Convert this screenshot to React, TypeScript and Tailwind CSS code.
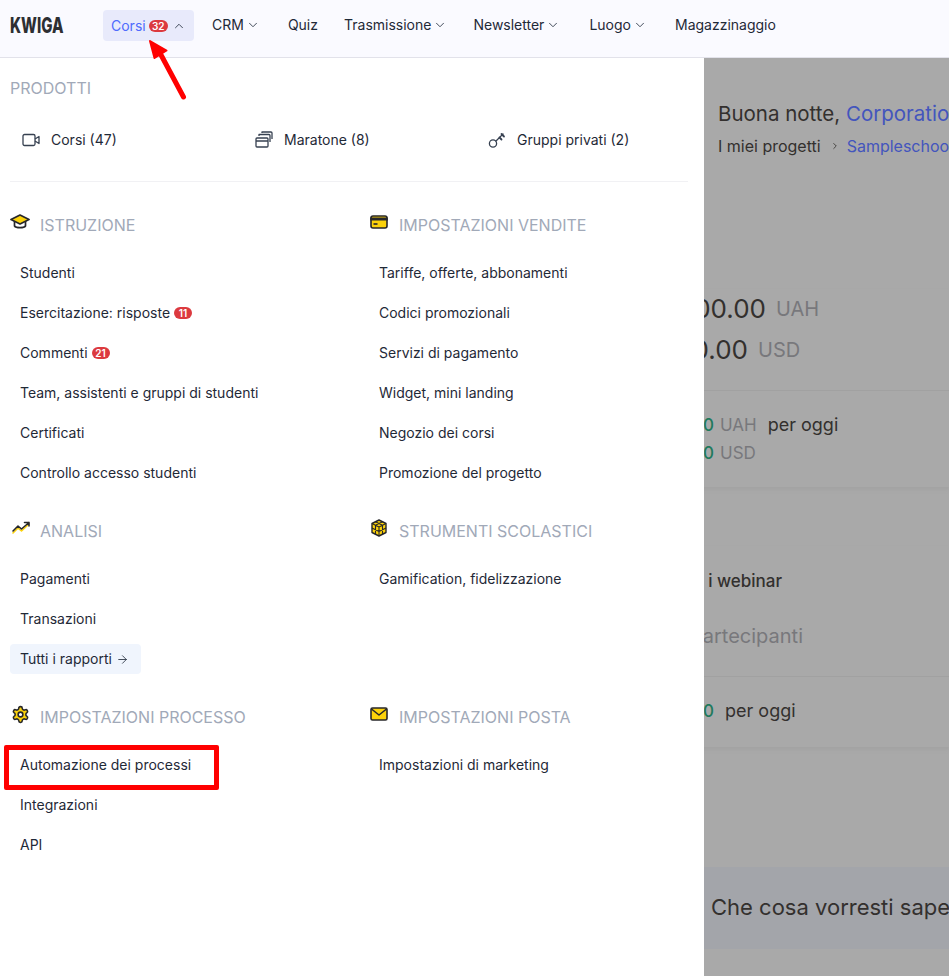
import React from 'react';
import { ChevronDown, ChevronUp, ChevronRight, ArrowRight } from 'lucide-react';

const Badge = ({ n, wide = false }: { n: number; wide?: boolean }) => (
  <span className={`inline-flex h-[12px] items-center justify-center rounded-full bg-[#dc3a3f] text-[10px] leading-none font-semibold text-white ${wide ? 'w-[19px]' : 'w-[18px]'}`}>
    {n}
  </span>
);

const NavItem = ({ label, menu = false, className = '' }: { label: string; menu?: boolean; className?: string }) => (
  <div className={`flex items-center gap-[2px] pb-[2px] ${className}`}>
    <span>{label}</span>
    {menu && <ChevronDown size={14} strokeWidth={1.6} className="text-[#374151]" />}
  </div>
);

// section icons, yellow with dark outline
const CapIcon = () => (
  <svg width="20" height="18" viewBox="0 0 20 18" fill="none" stroke="#27272a" strokeWidth="1.7" strokeLinejoin="round">
    <path d="M4.5 8v5c1.5 2.2 9.5 2.2 11 0V8" fill="#fff" />
    <path d="M10 2L1 6.5l9 4.5 9-4.5L10 2z" fill="#fcd20a" />
  </svg>
);

const CardIcon = () => (
  <svg width="18" height="14" viewBox="0 0 18 14" fill="none" stroke="#27272a" strokeWidth="1.6" className="ml-[1px]">
    <rect x="1" y="1" width="16" height="12" rx="2" fill="#fcd20a" />
    <path d="M1 3.2h16v1.6H1z" fill="#27272a" />
    <path d="M3.5 9h4" />
  </svg>
);

const TrendIcon = () => (
  <svg width="20" height="14" viewBox="0 0 20 14" fill="none" strokeWidth="1.6" strokeLinecap="round" strokeLinejoin="round" className="ml-[1px]">
    <path d="M2 12l5-5 3.5 3L18 3" stroke="#fcd20a" />
    <path d="M2 10l5-5 3.5 3L18 1.5M13.5 1.5H18V5" stroke="#27272a" />
  </svg>
);

const CubeIcon = () => (
  <svg width="18" height="18" viewBox="0 0 18 18" fill="#fcd20a" stroke="#27272a" strokeWidth="1.4" strokeLinejoin="round" className="ml-[1px]">
    <path d="M9 1l7 3.5v9L9 17l-7-3.5v-9L9 1z" />
    <path d="M2 4.5L9 8l7-3.5M9 8v9M5.5 2.8l7 3.5M12.5 2.8l-7 3.5M2 9l7 3.5L16 9M5.5 6.3v9M12.5 6.3v9" fill="none" strokeWidth="1.1" />
  </svg>
);

const GearIcon = () => (
  <svg width="19" height="19" viewBox="0 0 24 24" fill="#fcd20a" stroke="#27272a" strokeWidth="2" strokeLinejoin="round" className="ml-[1px]">
    <path d="M12.2 2h-.4a2 2 0 0 0-2 2v.2a2 2 0 0 1-1 1.7l-.4.3a2 2 0 0 1-2 0l-.2-.1a2 2 0 0 0-2.7.7l-.2.4a2 2 0 0 0 .7 2.7l.2.1a2 2 0 0 1 1 1.7v.5a2 2 0 0 1-1 1.8l-.2.1a2 2 0 0 0-.7 2.7l.2.4a2 2 0 0 0 2.7.7l.2-.1a2 2 0 0 1 2 0l.4.3a2 2 0 0 1 1 1.7v.2a2 2 0 0 0 2 2h.4a2 2 0 0 0 2-2v-.2a2 2 0 0 1 1-1.7l.4-.3a2 2 0 0 1 2 0l.2.1a2 2 0 0 0 2.7-.7l.2-.4a2 2 0 0 0-.7-2.7l-.2-.1a2 2 0 0 1-1-1.8v-.5a2 2 0 0 1 1-1.7l.2-.1a2 2 0 0 0 .7-2.7l-.2-.4a2 2 0 0 0-2.7-.7l-.2.1a2 2 0 0 1-2 0l-.4-.3a2 2 0 0 1-1-1.7V4a2 2 0 0 0-2-2z" />
    <circle cx="12" cy="12" r="3" fill="#fff" />
  </svg>
);

const MailIcon = () => (
  <svg width="18" height="14" viewBox="0 0 18 14" fill="none" stroke="#27272a" strokeWidth="1.6" strokeLinejoin="round" className="ml-[1px]">
    <rect x="1" y="1" width="16" height="12" rx="1.5" fill="#fcd20a" />
    <path d="M1.5 2L9 8l7.5-6" />
  </svg>
);

const VideoIcon = () => (
  <svg width="18" height="18" viewBox="0 0 18 18" fill="none" stroke="#374151" strokeWidth="1.3" strokeLinejoin="round" className="shrink-0">
    <rect x="1" y="3.5" width="12" height="11" rx="1.5" />
    <path d="M13 8l4-2.5v7L13 10" />
  </svg>
);

const StackIcon = () => (
  <svg width="18" height="18" viewBox="0 0 18 18" fill="none" stroke="#374151" strokeWidth="1.3" strokeLinejoin="round" className="shrink-0">
    <rect x="1" y="7" width="12" height="9" rx="1" />
    <path d="M1 10h12M4 5V3.5h10a1 1 0 0 1 1 1V11M7 2V1h9a1 1 0 0 1 1 1v6" />
  </svg>
);

const KeyIcon = () => (
  <svg width="18" height="18" viewBox="0 0 18 18" fill="none" stroke="#374151" strokeWidth="1.3" strokeLinecap="round" className="shrink-0">
    <circle cx="5" cy="12.5" r="3.6" />
    <path d="M8 10l7-7" />
    <path d="M11.5 6.5l2 2M13.5 3l2.5 2.5" strokeWidth="1.8" />
  </svg>
);

const Section = ({ icon, title, items }: { icon: React.ReactNode; title: string; items: React.ReactNode[] }) => (
  <div>
    <div className="flex h-6 items-center">
      <div className="flex w-[30px] -translate-y-[3px] items-center">{icon}</div>
      <span className="text-base text-[#a1a9b8]">{title}</span>
    </div>
    <div className="mt-4 flex flex-col">
      {items.map((item, i) => (
        <div key={i} className="flex h-10 items-center px-[10px]">
          {item}
        </div>
      ))}
    </div>
  </div>
);

// page under the open menu, dimmed
const Background = () => (
  <div className="h-[918px] overflow-hidden bg-[#a9a9a9] text-[#33302e]">
    <div className="pl-[718px] pt-[42px] whitespace-nowrap">
      <div className="text-[20.5px] leading-[28px]">
        Buona notte, <span className="text-[#4355bd]">Corporation</span>
      </div>
      <div className="mt-[8px] flex items-center text-base leading-[20px]">
        <span className="shrink-0">I miei progetti</span>
        <ChevronRight size={10} strokeWidth={2} className="mr-[7px] ml-[9px] shrink-0" />
        <span className="shrink-0 text-[#4355bd]">Sampleschool</span>
      </div>
    </div>
    <div className="mt-[133px] h-[198px] shadow-[0_3px_3px_#a3a3a3] whitespace-nowrap">
      <div className="flex h-[80px] flex-col">
        <div className="flex h-10 w-[819px] shrink-0 items-center justify-end gap-[10px]">
          <span className="text-[26px]">100.00</span>
          <span className="w-[43px] text-[20px] text-[#78787c]">UAH</span>
        </div>
        <div className="mt-[1px] flex h-10 w-[801px] shrink-0 items-center justify-end gap-[10px]">
          <span className="text-[26px]">100.00</span>
          <span className="w-[43px] text-[20px] text-[#78787c]">USD</span>
        </div>
      </div>
      <div className="mt-[21px] border-t border-[#a1a1a1] pt-[20px]">
        <div className="flex h-[28px] items-center pl-[600px] text-[17px]">
          <span className="w-[114px] text-right font-medium text-[#1f7a5c]">0.00</span>
          <span className="ml-[6px] text-[#78787c]">UAH</span>
          <span className="ml-[11px] text-[18px]">per oggi</span>
        </div>
        <div className="flex h-[28px] items-center pl-[600px] text-[17px]">
          <span className="w-[114px] text-right font-medium text-[#1f7a5c]">0.00</span>
          <span className="ml-[6px] text-[#78787c]">USD</span>
        </div>
      </div>
    </div>
    <div className="mt-[59px] h-[201px] shadow-[0_3px_3px_#a3a3a3] whitespace-nowrap">
      <div className="pt-[23px] pl-[600px] text-[17px] font-medium">
        <span className="inline-block w-[182px] text-right">Tutti i webinar</span>
      </div>
      <div className="mt-[29px] pl-[500px] text-[20px] text-[#78787c]">
        <span className="inline-block w-[303px] text-right">Partecipanti</span>
      </div>
      <div className="mt-[25px] flex items-center border-t border-[#a1a1a1] pt-[21px] pl-[600px] text-[17px]">
        <span className="w-[114px] text-right font-medium text-[#1f7a5c]">0</span>
        <span className="ml-[11px] text-[18px]">per oggi</span>
      </div>
    </div>
    <div className="mt-[120px] flex h-[82px] items-center bg-[#a3a5aa] pl-[711px] text-[22px] whitespace-nowrap">
      Che cosa vorresti sapere?
    </div>
  </div>
);

const App: React.FC = () => {
  return (
    <div className="relative h-[976px] w-[949px] overflow-hidden font-['Inter',sans-serif] text-sm text-[#1f2937]">
      {/* Top bar */}
      <header className="flex h-[58px] items-start border-b border-[#e2e2ea] bg-[#fafaff] pt-[10px]">
        <div className="flex h-[31px] w-[103px] items-center pl-[10px]">
          <span className="block origin-left scale-x-[.68] text-[22px] font-extrabold text-[#2d2f33]">KWIGA</span>
        </div>
        <div className="flex h-[31px] w-[91px] items-center rounded bg-[#e8eafb] pl-2">
          <span className="text-[#4f6bfd]">Corsi</span>
          <span className="ml-[3px] flex"><Badge n={32} wide /></span>
          <ChevronUp size={14} strokeWidth={1.6} className="ml-[4px] text-[#374151]" />
        </div>
        <nav className="ml-[18px] flex h-[31px] items-center gap-[27px]">
          <NavItem label="CRM" menu />
          <NavItem label="Quiz" className="ml-[1px]" />
          <NavItem label="Trasmissione" menu className="-ml-[1px]" />
          <NavItem label="Newsletter" menu className="-ml-[1px]" />
          <NavItem label="Luogo" menu className="ml-[2px]" />
          <NavItem label="Magazzinaggio" className="ml-[1px]" />
        </nav>
      </header>

      <Background />

      {/* Open menu */}
      <div className="absolute top-[58px] left-0 h-[918px] w-[704px] bg-white pr-[16px] pl-[10px]">
        <div className="pt-[18px] text-base leading-6 text-[#a1a9b8]">PRODOTTI</div>
        <div className="mt-[28px] grid grid-cols-[233px_233px_1fr] border-b border-[#f1f1f4] pb-[29px] pl-3">
          <div className="flex h-[24px] items-center gap-[11px]">
            <VideoIcon />
            Corsi (47)
          </div>
          <div className="flex h-[24px] items-center gap-[11px]">
            <StackIcon />
            Maratone (8)
          </div>
          <div className="flex h-[24px] items-center gap-[11px]">
            <KeyIcon />
            Gruppi privati (2)
          </div>
        </div>
        <div className="mt-[31px] grid grid-cols-[359px_1fr] gap-y-[26px]">
          <Section
            icon={<CapIcon />}
            title="ISTRUZIONE"
            items={[
              'Studenti',
              <span className="flex items-center gap-1">Esercitazione: risposte <Badge n={11} /></span>,
              <span className="flex items-center gap-1">Commenti <Badge n={21} /></span>,
              'Team, assistenti e gruppi di studenti',
              'Certificati',
              'Controllo accesso studenti',
            ]}
          />
          <Section
            icon={<CardIcon />}
            title="IMPOSTAZIONI VENDITE"
            items={[
              'Tariffe, offerte, abbonamenti',
              'Codici promozionali',
              'Servizi di pagamento',
              'Widget, mini landing',
              'Negozio dei corsi',
              'Promozione del progetto',
            ]}
          />
          <div className="pb-[5px]">
            <Section
              icon={<TrendIcon />}
              title="ANALISI"
              items={['Pagamenti', 'Transazioni']}
            />
            <div className="mt-[5px] flex h-[30px] w-[131px] items-center gap-1 rounded bg-[#f0f5fd] px-[10px]">
              Tutti i rapporti <ArrowRight size={13} strokeWidth={1.5} />
            </div>
          </div>
          <Section
            icon={<CubeIcon />}
            title="STRUMENTI SCOLASTICI"
            items={['Gamification, fidelizzazione']}
          />
          <Section
            icon={<GearIcon />}
            title="IMPOSTAZIONI PROCESSO"
            items={['Automazione dei processi', 'Integrazioni', 'API']}
          />
          <Section
            icon={<MailIcon />}
            title="IMPOSTAZIONI POSTA"
            items={['Impostazioni di marketing']}
          />
        </div>
      </div>

      {/* Annotations */}
      <div className="absolute top-[745px] left-[4px] h-[45px] w-[215px] rounded-[2px] border-[5px] border-[#ff0000]" />
      <svg className="absolute top-[36px] left-[145px]" width="46" height="66" viewBox="0 0 46 66" fill="none">
        <path d="M38.5 61L15 17" stroke="#ff0000" strokeWidth="5" strokeLinecap="round" />
        <path d="M5 5L21.5 14.5L9.5 22z" fill="#ff0000" stroke="#ff0000" strokeWidth="2" strokeLinejoin="round" />
      </svg>
    </div>
  );
};

export default App;
